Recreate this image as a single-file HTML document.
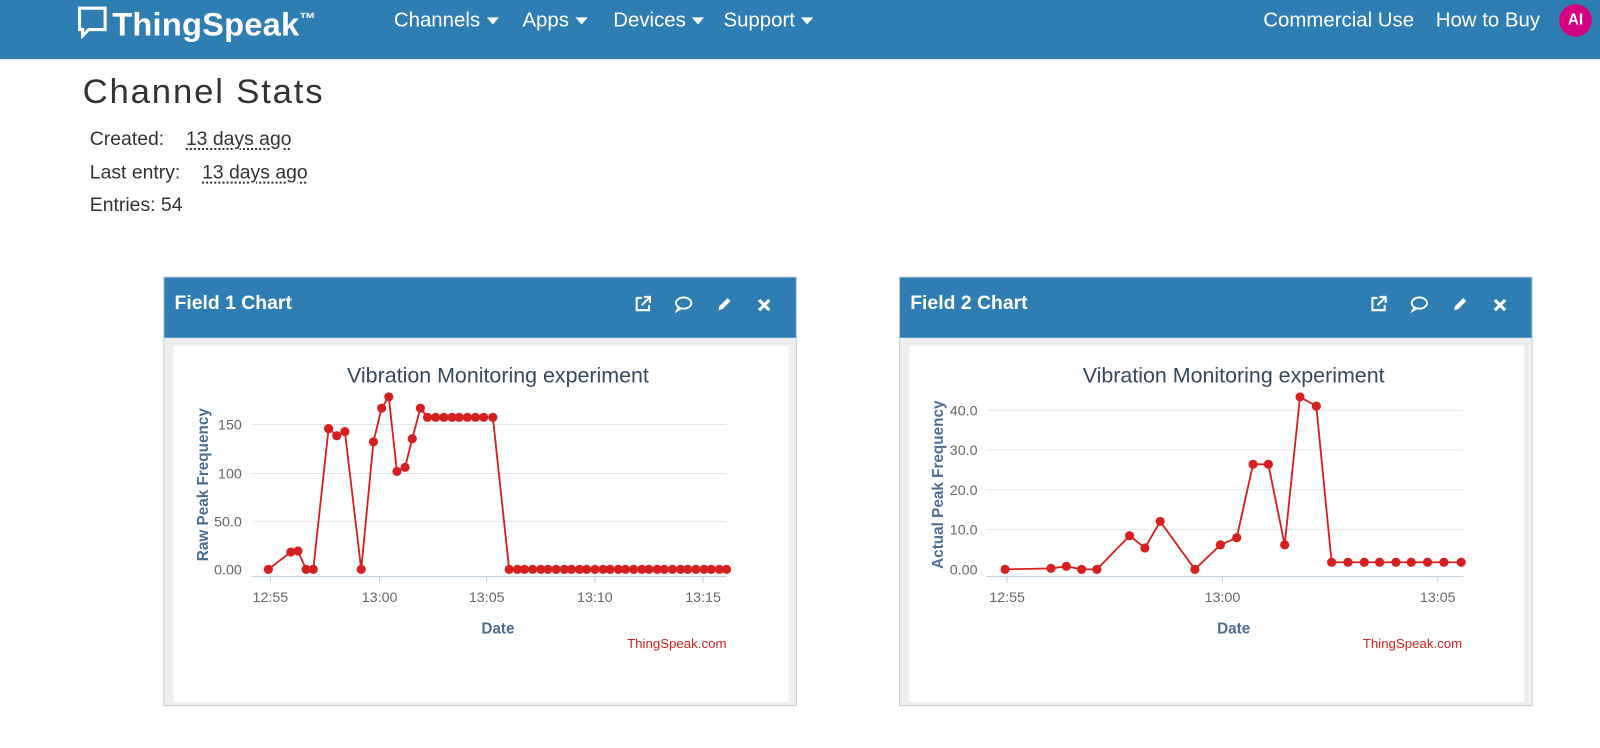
<!DOCTYPE html>
<html><head><meta charset="utf-8"><style>
body{margin:0;width:1600px;height:748px;background:#fff;font-family:"Liberation Sans",sans-serif;overflow:hidden;color:#333}
#w{position:absolute;left:0;top:0;width:1568px;height:733px;transform:scale(1.0204);transform-origin:0 0}
.nav{position:absolute;left:0;top:0;width:1568px;height:58px;background:#2e7db3}
.nav span{position:absolute;color:#fff;font-size:20px;top:9px}
.logo{position:absolute;left:76px;top:5px;color:#fff;font-weight:bold;font-size:32px;letter-spacing:0.2px}
.tri{display:inline-block;width:0;height:0;border-left:6px solid transparent;border-right:6px solid transparent;border-top:7px solid #fff;vertical-align:middle;margin-left:6px}
h1{position:absolute;left:81px;top:71px;margin:0;font-weight:normal;font-size:34px;color:#333;letter-spacing:1.8px}
.st{position:absolute;left:88px;font-size:19px;color:#333}
.st u{text-decoration:underline dotted;text-underline-offset:4px;margin-left:16px}
.panel{position:absolute;top:271px;width:621px;height:421px;background:#eee;border:1px solid #ccc;box-sizing:border-box}
.ph{height:59px;background:#2e7db3;color:#fff;font-weight:bold;font-size:19px;padding:15px 0 0 10px;box-sizing:border-box;position:relative}
.inner{position:absolute;left:9px;top:67px;width:603px;height:349px;background:#fff}
.ic{position:absolute;top:17px}
</style></head><body><div id="w">
<div class="nav">
<div class="logo"><svg width="30" height="34" viewBox="0 0 30 34" style="vertical-align:-4px;margin-right:4px"><path d="M2 3h25v21H11l-6 6v-6H2z" fill="none" stroke="#fff" stroke-width="3"/></svg>ThingSpeak<sup style="font-size:16px;font-weight:bold">™</sup></div>
<span style="left:386px">Channels<i class="tri"></i></span>
<span style="left:512px">Apps<i class="tri"></i></span>
<span style="left:601px">Devices<i class="tri"></i></span>
<span style="left:709px">Support<i class="tri"></i></span>
<span style="left:1238px">Commercial Use</span>
<span style="left:1407px">How to Buy</span>
<div style="position:absolute;left:1528px;top:4px;width:32px;height:32px;border-radius:50%;background:#d4007f;color:#fff;font-weight:bold;font-size:15px;text-align:center;line-height:32px">AI</div>
</div>
<h1>Channel Stats</h1>
<div class="st" style="top:126px">Created: <u>13 days ago</u></div>
<div class="st" style="top:159px">Last entry: <u>13 days ago</u></div>
<div class="st" style="top:191px">Entries: 54</div>

<div class="panel" style="left:160px"><div class="ph">Field 1 Chart
<svg class="ic" style="left:460px" width="18" height="18" viewBox="0 0 18 18"><path d="M8 3H3v12h12v-5" fill="none" stroke="#fff" stroke-width="2"/><path d="M10 2h6v6M16 2L8 10" fill="none" stroke="#fff" stroke-width="2"/></svg>
<svg class="ic" style="left:500px" width="18" height="18" viewBox="0 0 18 18"><ellipse cx="9" cy="8" rx="7.5" ry="5.5" fill="none" stroke="#fff" stroke-width="1.8"/><path d="M4 12l-2 4 5-3" fill="none" stroke="#fff" stroke-width="1.6"/></svg>
<svg class="ic" style="left:540px" width="18" height="18" viewBox="0 0 18 18"><path d="M3 15l1-4 8-8 3 3-8 8z" fill="#fff"/></svg>
<svg class="ic" style="left:580px" width="16" height="18" viewBox="0 0 16 18"><path d="M3 5l10 10M13 5L3 15" stroke="#fff" stroke-width="3"/></svg>
</div><div class="inner"></div></div>

<div class="panel" style="left:881px"><div class="ph">Field 2 Chart
<svg class="ic" style="left:460px" width="18" height="18" viewBox="0 0 18 18"><path d="M8 3H3v12h12v-5" fill="none" stroke="#fff" stroke-width="2"/><path d="M10 2h6v6M16 2L8 10" fill="none" stroke="#fff" stroke-width="2"/></svg>
<svg class="ic" style="left:500px" width="18" height="18" viewBox="0 0 18 18"><ellipse cx="9" cy="8" rx="7.5" ry="5.5" fill="none" stroke="#fff" stroke-width="1.8"/><path d="M4 12l-2 4 5-3" fill="none" stroke="#fff" stroke-width="1.6"/></svg>
<svg class="ic" style="left:540px" width="18" height="18" viewBox="0 0 18 18"><path d="M3 15l1-4 8-8 3 3-8 8z" fill="#fff"/></svg>
<svg class="ic" style="left:580px" width="16" height="18" viewBox="0 0 16 18"><path d="M3 5l10 10M13 5L3 15" stroke="#fff" stroke-width="3"/></svg>
</div><div class="inner"></div></div>

<svg width="1568" height="733" style="position:absolute;left:0;top:0" font-family="Liberation Sans, sans-serif">
<g fill="#34495e" font-size="21" text-anchor="middle"><text x="488" y="375">Vibration Monitoring experiment</text><text x="1209" y="375">Vibration Monitoring experiment</text></g>
<g stroke="#e6e6e6" stroke-width="1">
<path d="M247 416H712M247 464H712M247 511H712M967 402H1434M967 441H1434M967 480H1434M967 519H1434"/></g>
<g stroke="#c0d0e0" stroke-width="1"><path d="M247 565H712M967 565H1434"/><path d="M265 565v6M372 565v6M477 565v6M583 565v6M689 565v6M987 565v6M1198 565v6M1409 565v6"/></g>
<g fill="#666" font-size="14" text-anchor="end"><text x="237" y="421">150</text><text x="237" y="469">100</text><text x="237" y="516">50.0</text><text x="237" y="563">0.00</text>
<text x="958" y="407">40.0</text><text x="958" y="446">30.0</text><text x="958" y="485">20.0</text><text x="958" y="524">10.0</text><text x="958" y="563">0.00</text></g>
<g fill="#666" font-size="14" text-anchor="middle"><text x="265" y="590">12:55</text><text x="372" y="590">13:00</text><text x="477" y="590">13:05</text><text x="583" y="590">13:10</text><text x="689" y="590">13:15</text>
<text x="987" y="590">12:55</text><text x="1198" y="590">13:00</text><text x="1409" y="590">13:05</text></g>
<g fill="#4a6e94" font-size="15" font-weight="bold" text-anchor="middle"><text x="488" y="621">Date</text><text x="1209" y="621">Date</text>
<text transform="translate(204 475) rotate(-90)">Raw Peak Frequency</text><text transform="translate(924 475) rotate(-90)">Actual Peak Frequency</text></g>
<g fill="#cc2222" font-size="13" text-anchor="end"><text x="712" y="635">ThingSpeak.com</text><text x="1433" y="635">ThingSpeak.com</text></g>
<polyline fill="none" stroke="#d62020" stroke-width="1.8" points="263,558 285,541 292,540 300,558 307,558 322,420 330,427 338,423 354,558 366,433 374,400 381,389 389,462 397,458 404,430 412,400 419,409 483,409 499,558 712,558"/>
<g fill="#d62020">
<circle cx="263" cy="558" r="4.5"/><circle cx="285" cy="541" r="4.5"/><circle cx="292" cy="540" r="4.5"/><circle cx="300" cy="558" r="4.5"/><circle cx="307" cy="558" r="4.5"/><circle cx="322" cy="420" r="4.5"/><circle cx="330" cy="427" r="4.5"/><circle cx="338" cy="423" r="4.5"/><circle cx="354" cy="558" r="4.5"/><circle cx="366" cy="433" r="4.5"/><circle cx="374" cy="400" r="4.5"/><circle cx="381" cy="389" r="4.5"/><circle cx="389" cy="462" r="4.5"/><circle cx="397" cy="458" r="4.5"/><circle cx="404" cy="430" r="4.5"/><circle cx="412" cy="400" r="4.5"/>
<circle cx="419" cy="409" r="4.5"/><circle cx="427" cy="409" r="4.5"/><circle cx="435" cy="409" r="4.5"/><circle cx="443" cy="409" r="4.5"/><circle cx="450" cy="409" r="4.5"/><circle cx="458" cy="409" r="4.5"/><circle cx="466" cy="409" r="4.5"/><circle cx="474" cy="409" r="4.5"/><circle cx="483" cy="409" r="4.5"/>
<circle cx="499" cy="558" r="4.5"/><circle cx="507" cy="558" r="4.5"/><circle cx="514" cy="558" r="4.5"/><circle cx="522" cy="558" r="4.5"/><circle cx="530" cy="558" r="4.5"/><circle cx="537" cy="558" r="4.5"/><circle cx="545" cy="558" r="4.5"/><circle cx="553" cy="558" r="4.5"/><circle cx="560" cy="558" r="4.5"/><circle cx="568" cy="558" r="4.5"/><circle cx="575" cy="558" r="4.5"/><circle cx="583" cy="558" r="4.5"/><circle cx="591" cy="558" r="4.5"/><circle cx="598" cy="558" r="4.5"/><circle cx="606" cy="558" r="4.5"/><circle cx="613" cy="558" r="4.5"/><circle cx="621" cy="558" r="4.5"/><circle cx="629" cy="558" r="4.5"/><circle cx="636" cy="558" r="4.5"/><circle cx="644" cy="558" r="4.5"/><circle cx="651" cy="558" r="4.5"/><circle cx="659" cy="558" r="4.5"/><circle cx="667" cy="558" r="4.5"/><circle cx="674" cy="558" r="4.5"/><circle cx="682" cy="558" r="4.5"/><circle cx="690" cy="558" r="4.5"/><circle cx="697" cy="558" r="4.5"/><circle cx="705" cy="558" r="4.5"/><circle cx="712" cy="558" r="4.5"/>
</g>
<polyline fill="none" stroke="#d62020" stroke-width="1.8" points="985,558 1030,557 1045,555 1060,558 1075,558 1107,525 1122,537 1137,511 1171,558 1196,534 1212,527 1228,455 1243,455 1259,534 1274,389 1290,398 1305,551 1434,551"/>
<g fill="#d62020">
<circle cx="985" cy="558" r="4.5"/><circle cx="1030" cy="557" r="4.5"/><circle cx="1045" cy="555" r="4.5"/><circle cx="1060" cy="558" r="4.5"/><circle cx="1075" cy="558" r="4.5"/><circle cx="1107" cy="525" r="4.5"/><circle cx="1122" cy="537" r="4.5"/><circle cx="1137" cy="511" r="4.5"/><circle cx="1171" cy="558" r="4.5"/><circle cx="1196" cy="534" r="4.5"/><circle cx="1212" cy="527" r="4.5"/><circle cx="1228" cy="455" r="4.5"/><circle cx="1243" cy="455" r="4.5"/><circle cx="1259" cy="534" r="4.5"/><circle cx="1274" cy="389" r="4.5"/><circle cx="1290" cy="398" r="4.5"/><circle cx="1305" cy="551" r="4.5"/><circle cx="1321" cy="551" r="4.5"/><circle cx="1337" cy="551" r="4.5"/><circle cx="1352" cy="551" r="4.5"/><circle cx="1368" cy="551" r="4.5"/><circle cx="1383" cy="551" r="4.5"/><circle cx="1399" cy="551" r="4.5"/><circle cx="1415" cy="551" r="4.5"/><circle cx="1432" cy="551" r="4.5"/>
</g>
</svg>
</div></body></html>
